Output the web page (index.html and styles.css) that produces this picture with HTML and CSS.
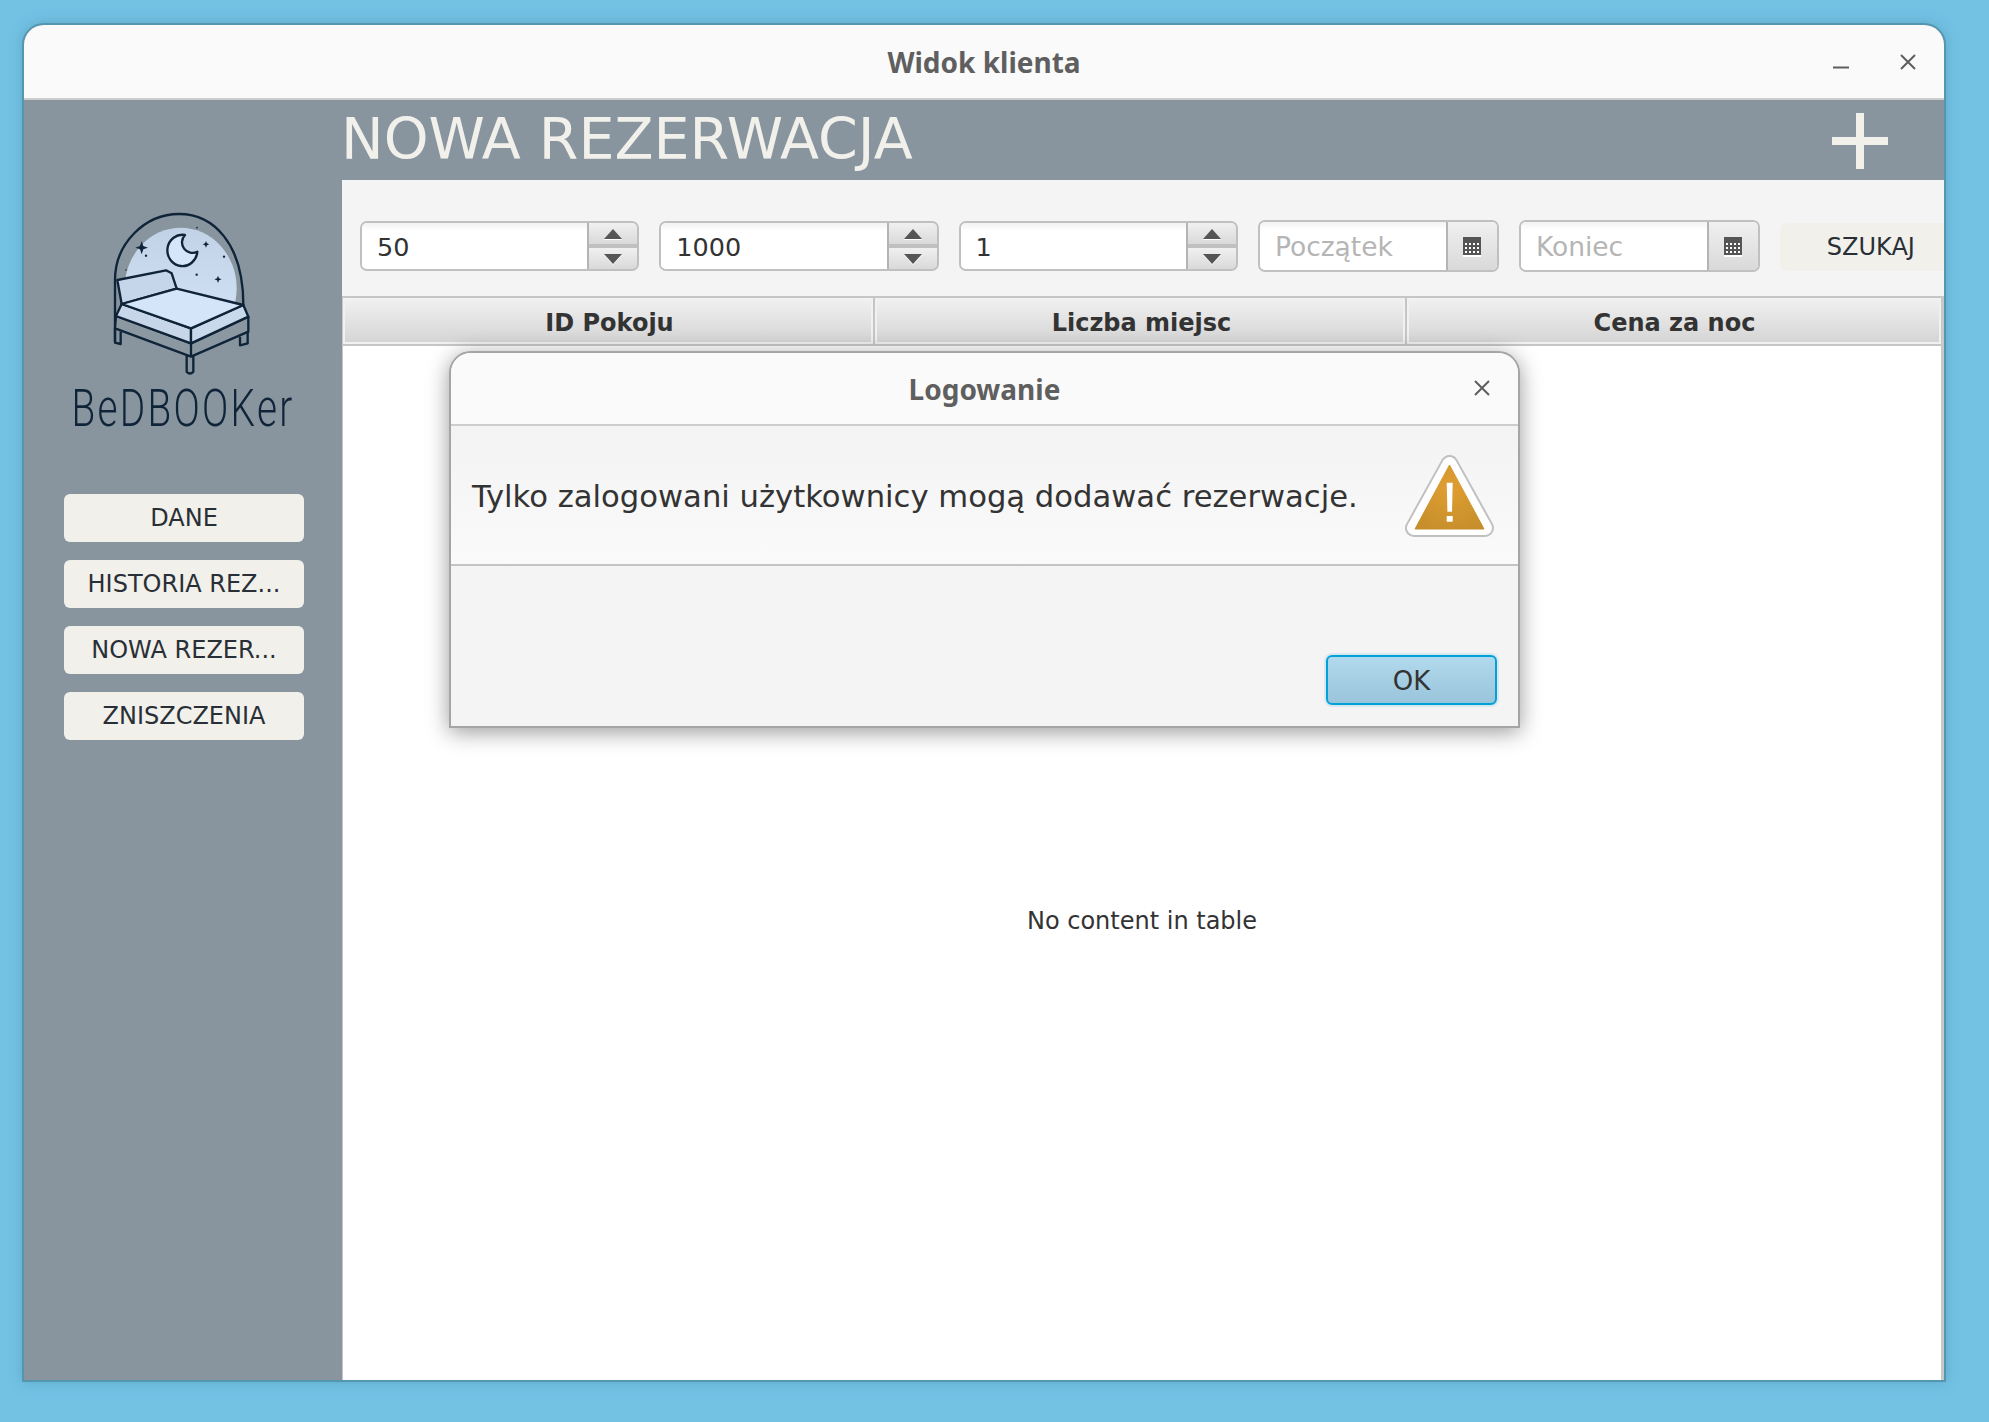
FILE: index.html
```html
<!DOCTYPE html>
<html lang="pl">
<head>
    <meta charset="UTF-8">
    <meta name="viewport" content="width=device-width, initial-scale=1.0">
    <title>Widok klienta</title>
    <link rel="stylesheet" href="styles.css">
</head>
<body>
    <div class="window">
        <div class="titlebar">
            <span></span>
            <span class="titlebar-text">Widok klienta</span>
            <div class="titlebar-buttons">
                <svg class="win-icon" viewBox="0 0 16 16"><path d="M0 13.5H16" /></svg>
                <svg class="win-icon" viewBox="0 0 16 16"><path d="M1 1L15 15M15 1L1 15" /></svg>
            </div>
        </div>

        <div class="main">
            <div class="sidebar">
                <svg class="logo" viewBox="0 0 780 570">
                    <defs>
                        <linearGradient id="sky" x1="0" y1="0" x2="0" y2="1">
                            <stop offset="0" stop-color="#c2d2e6" />
                            <stop offset="1" stop-color="#d6e7fb" />
                        </linearGradient>
                    </defs>
                    <ellipse cx="362" cy="295" rx="168" ry="182" fill="url(#sky)" />
                    <g class="logo-line">
                        <path d="M165 455V270C165 160 255 72 357 72C460 72 550 160 550 345" fill="none" />
                        <path d="M375 135A45 47 0 1 0 412 185A31.5 31.5 0 0 1 375 135Z" fill="#d6e6fa" />
                        <path d="M172 270L318 241L335 250L350 296L185 342Z" fill="#c5d5ea" />
                        <path d="M168 378L393 460L565 380V425L393 500L165 415Z" fill="#8b98a2" />
                        <path d="M185 342L393 415V460L168 378Z" fill="#c7d6e9" />
                        <path d="M393 415L550 345L565 380L393 460Z" fill="#c9d9ec" />
                        <path d="M185 342L350 296L550 345L393 415Z" fill="#d4e5fa" />
                        <path d="M393 460V500" fill="none" />
                        <path d="M165 415V458L182 462V425M540 440V466L563 460V425M380 497V545Q390 556 400 545V497" fill="none" />
                    </g>
                    <g class="logo-star">
                        <path d="M245 153L250 168L264 173L250 178L245 193L240 178L226 173L240 168Z" />
                        <path d="M438 153L441 160L448 163L441 166L438 173L435 166L428 163L435 160Z" />
                        <path d="M474 257L477 265L485 268L477 271L474 279L471 271L463 268L471 265Z" />
                        <circle cx="258" cy="197" r="3.5" />
                        <circle cx="492" cy="200" r="3.5" />
                        <circle cx="410" cy="254" r="3.5" />
                        <circle cx="198" cy="240" r="2.5" />
                        <circle cx="411" cy="113" r="2.5" />
                    </g>
                </svg>
                <div class="logo-text">BeDBOOKer</div>
                <div class="nav">
                    <button class="nav-btn">DANE</button>
                    <button class="nav-btn">HISTORIA REZ...</button>
                    <button class="nav-btn">NOWA REZER...</button>
                    <button class="nav-btn">ZNISZCZENIA</button>
                </div>
            </div>

            <div class="content">
                <div class="page-header">
                    <h1 class="page-title">NOWA REZERWACJA</h1>
                    <svg class="plus-icon" viewBox="0 0 56 56"><path d="M24 0H32V24H56V32H32V56H24V32H0V24H24Z" /></svg>
                </div>

                <div class="panel">
                    <div class="toolbar">
                        <div class="field spinner">
                            <input class="field-input" type="text" value="50">
                            <div class="spin-btns">
                                <div class="spin-btn"><span class="arrow-up"></span></div>
                                <div class="spin-btn"><span class="arrow-down"></span></div>
                            </div>
                        </div>
                        <div class="field spinner">
                            <input class="field-input" type="text" value="1000">
                            <div class="spin-btns">
                                <div class="spin-btn"><span class="arrow-up"></span></div>
                                <div class="spin-btn"><span class="arrow-down"></span></div>
                            </div>
                        </div>
                        <div class="field spinner">
                            <input class="field-input" type="text" value="1">
                            <div class="spin-btns">
                                <div class="spin-btn"><span class="arrow-up"></span></div>
                                <div class="spin-btn"><span class="arrow-down"></span></div>
                            </div>
                        </div>
                        <div class="field date">
                            <input class="field-input" type="text" placeholder="Początek">
                            <div class="date-btn">
                                <svg class="cal-icon" viewBox="0 0 18 20"><path fill="#fff" d="M0 18H18V20H0Z" /><path fill="#555" d="M0 0H18V18H0Z" /><path fill="#fff" d="M2 6h2v2H2zM6 6h2v2H6zM10 6h2v2h-2zM14 6h2v2h-2zM2 10h2v2H2zM6 10h2v2H6zM10 10h2v2h-2zM14 10h2v2h-2zM2 14h2v2H2zM6 14h2v2H6zM10 14h2v2h-2zM14 14h2v2h-2z" /></svg>
                            </div>
                        </div>
                        <div class="field date">
                            <input class="field-input" type="text" placeholder="Koniec">
                            <div class="date-btn">
                                <svg class="cal-icon" viewBox="0 0 18 20"><path fill="#fff" d="M0 18H18V20H0Z" /><path fill="#555" d="M0 0H18V18H0Z" /><path fill="#fff" d="M2 6h2v2H2zM6 6h2v2H6zM10 6h2v2h-2zM14 6h2v2h-2zM2 10h2v2H2zM6 10h2v2H6zM10 10h2v2h-2zM14 10h2v2h-2zM2 14h2v2H2zM6 14h2v2H6zM10 14h2v2h-2zM14 14h2v2h-2z" /></svg>
                            </div>
                        </div>
                        <button class="search-btn">SZUKAJ</button>
                    </div>

                    <div class="table">
                        <div class="table-head">
                            <div class="table-col">ID Pokoju</div>
                            <div class="table-col">Liczba miejsc</div>
                            <div class="table-col">Cena za noc</div>
                        </div>
                        <div class="table-empty">No content in table</div>
                    </div>
                </div>
            </div>
        </div>

        <div class="dialog">
            <div class="dialog-title">
                <span></span>
                <span class="dialog-title-text">Logowanie</span>
                <svg class="win-icon dialog-close" viewBox="0 0 16 16"><path d="M1 1L15 15M15 1L1 15" /></svg>
            </div>
            <div class="dialog-msg">
                <span class="dialog-text">Tylko zalogowani użytkownicy mogą dodawać rezerwacje.</span>
                <svg class="warn-icon" viewBox="0 0 89 82">
                    <defs>
                        <radialGradient id="warn" cx="0.5" cy="0.35" r="0.7">
                            <stop offset="0" stop-color="#e09e32" />
                            <stop offset="1" stop-color="#c68f2b" />
                        </radialGradient>
                    </defs>
                    <path d="M44.5 9L9 73H80Z" fill="#fff" stroke="#c0c0c0" stroke-width="18" stroke-linejoin="round" />
                    <path d="M44.5 9L9 73H80Z" fill="#fff" stroke="#fff" stroke-width="14" stroke-linejoin="round" />
                    <path d="M44.5 10L10 74H79Z" fill="url(#warn)" stroke="url(#warn)" stroke-width="1" stroke-linejoin="round" />
                    <path d="M41.7 27.7H47.7L47 56.7H42.4Z" fill="#fff" />
                    <path d="M41.7 61H47.7V66.7H41.7Z" fill="#fff" />
                </svg>
            </div>
            <div class="dialog-footer">
                <button class="ok-btn">OK</button>
            </div>
        </div>
    </div>
</body>
</html>
```

FILE: styles.css
```css
* {
    box-sizing: border-box;
}
body {
    margin: 0;
    padding: 23px 0 0 22px;
    height: 1422px;
    overflow: hidden;
    background-color: #73c2e4;
    font-family: "DejaVu Sans", sans-serif;
}
button, input {
    font-family: inherit;
}
.window {
    position: relative;
    width: 1924px;
    height: 1359px;
    display: flex;
    flex-direction: column;
    overflow: hidden;
    border: 2px solid #5496b0;
    border-radius: 22px 22px 0 0;
    background: #88959f;
    box-shadow: 0 0 14px rgba(60, 120, 150, 0.35);
}
.titlebar {
    height: 75px;
    flex-shrink: 0;
    display: grid;
    grid-template-columns: 1fr auto 1fr;
    align-items: center;
    background: #fafafa;
    border-bottom: 2px solid #cdcdcd;
}
.titlebar-text {
    padding-top: 1px;
    font-family: "Noto Sans", sans-serif;
    font-weight: 700;
    font-size: 28px;
    color: #5f5f5f;
}
.titlebar-buttons {
    display: flex;
    justify-content: flex-end;
    gap: 51px;
    padding-right: 28px;
}
.win-icon {
    width: 16px;
    height: 16px;
    fill: none;
    stroke: #5e5e5e;
    stroke-width: 2;
}
.main {
    flex: 1;
    display: flex;
    min-height: 0;
}
.sidebar {
    width: 318px;
    flex-shrink: 0;
    padding-top: 90px;
}
.logo {
    display: block;
    width: 260px;
    height: 190px;
    margin-left: 36px;
}
.logo-text {
    width: 294px;
    height: 60px;
    margin-left: 12px;
    text-align: center;
    white-space: nowrap;
    font-family: Roboto, sans-serif;
    font-weight: 300;
    font-size: 51px;
    line-height: 58px;
    letter-spacing: 3px;
    color: #0f2438;
    transform: scaleX(0.76);
}
.logo-line {
    stroke: #0f2438;
    stroke-width: 7;
    stroke-linejoin: round;
}
.logo-star {
    fill: #0f2438;
}
.nav {
    display: flex;
    flex-direction: column;
    gap: 18px;
    margin-top: 54px;
    padding-left: 40px;
}
.nav-btn {
    width: 240px;
    height: 48px;
    border: none;
    border-radius: 6px;
    background: #f2f0eb;
    color: #292f36;
    font-size: 24px;
}
.content {
    flex: 1;
    min-width: 0;
    display: flex;
    flex-direction: column;
}
.page-header {
    height: 80px;
    flex-shrink: 0;
    display: flex;
    align-items: center;
    justify-content: space-between;
    padding: 0 56px 0 0;
}
.page-title {
    margin: 0 0 3px -1px;
    font-size: 57px;
    font-weight: 400;
    color: #f2f0eb;
}
.plus-icon {
    width: 56px;
    height: 56px;
    margin-top: 2px;
    fill: #f2f0eb;
}
.panel {
    flex: 1;
    min-height: 0;
    display: flex;
    flex-direction: column;
    background: #f4f4f4;
}
.toolbar {
    height: 116px;
    flex-shrink: 0;
    display: flex;
    align-items: center;
    gap: 20px;
    padding: 40px 0 24px 18px;
}
.field {
    flex-shrink: 0;
    display: flex;
    border: 2px solid #c0c0c0;
    border-radius: 7px;
    background: #fff;
    overflow: hidden;
}
.spinner {
    width: 279.3px;
    height: 50px;
}
.date {
    width: 241px;
    height: 52px;
}
.field-input {
    flex: 1;
    min-width: 0;
    border: none;
    outline: none;
    padding: 1px 14px 0 15px;
    font-size: 25.5px;
    color: #333;
    background: linear-gradient(#f2f2f2, #fff 8px);
}
.date .field-input {
    font-size: 26.5px;
}
.field-input::placeholder {
    color: #b5b5b5;
    opacity: 1;
}
.spin-btns {
    width: 50px;
    flex-shrink: 0;
    display: flex;
    flex-direction: column;
    gap: 4px;
    background: #c0c0c0;
    border-left: 2px solid #b4b4b4;
}
.spin-btn {
    flex: 1;
    display: flex;
    align-items: center;
    justify-content: center;
    background: linear-gradient(#f0f0f0, #d9d9d9);
}
.arrow-up, .arrow-down {
    width: 0;
    height: 0;
    border-left: 9px solid transparent;
    border-right: 9px solid transparent;
    filter: drop-shadow(0 1px 0 #fff);
}
.arrow-up {
    border-bottom: 10px solid #555;
}
.arrow-down {
    border-top: 10px solid #555;
}
.date-btn {
    width: 51px;
    flex-shrink: 0;
    display: flex;
    align-items: center;
    justify-content: center;
    padding-top: 2px;
    border-left: 2px solid #b4b4b4;
    background: linear-gradient(#f0f0f0, #d9d9d9);
}
.cal-icon {
    width: 18px;
    height: 20px;
}
.search-btn {
    width: 182px;
    height: 48px;
    flex-shrink: 0;
    margin-top: 2px;
    border: none;
    border-radius: 6px;
    background: #f2f0eb;
    color: #292f36;
    font-size: 24px;
}
.table {
    flex: 1;
    min-height: 0;
    display: flex;
    flex-direction: column;
    background: #fff;
    border-left: 1px solid #c6c6c6;
    border-right: 3px solid #c8c8c8;
}
.table-head {
    display: grid;
    grid-template-columns: 532px 532px 1fr;
    height: 50px;
    flex-shrink: 0;
    border-top: 2px solid #c6c6c6;
    border-bottom: 2px solid #c6c6c6;
}
.table-col {
    display: flex;
    align-items: center;
    justify-content: center;
    padding: 3px 0 0 3px;
    background: linear-gradient(#f1f1f1, #d4d4d4);
    box-shadow: inset 0 0 0 2px #f1f1f1;
    border-right: 2px solid #c6c6c6;
    font-size: 24px;
    font-weight: 700;
    color: #333;
}
.table-col:last-child {
    padding-left: 1px;
    border-right: none;
}
.table-empty {
    padding-top: 561px;
    text-align: center;
    font-size: 24px;
    color: #333;
}
.dialog {
    position: absolute;
    left: 425px;
    top: 326px;
    width: 1071px;
    height: 377px;
    display: flex;
    flex-direction: column;
    background: #f4f4f4;
    border: 2px solid #a5a5a5;
    border-radius: 22px 22px 0 0;
    box-shadow: 0 4px 22px rgba(0, 0, 0, 0.4);
}
.dialog-title {
    height: 73px;
    flex-shrink: 0;
    display: grid;
    grid-template-columns: 1fr auto 1fr;
    align-items: center;
    background: #fafafa;
    border-bottom: 2px solid #cdcdcd;
    border-radius: 20px 20px 0 0;
}
.dialog-title-text {
    font-family: "Noto Sans", sans-serif;
    font-weight: 700;
    font-size: 28px;
    color: #5f5f5f;
}
.dialog-close {
    justify-self: end;
    margin: 0 28px 2px 0;
}
.dialog-msg {
    height: 140px;
    flex-shrink: 0;
    display: flex;
    align-items: center;
    justify-content: space-between;
    padding: 2px 24px 0 21px;
    background: linear-gradient(#f3f3f3, #fafafa);
    border-bottom: 2px solid #c4c4c4;
}
.dialog-text {
    white-space: nowrap;
    font-size: 30.65px;
    color: #333;
}
.warn-icon {
    width: 89px;
    height: 82px;
}
.dialog-footer {
    flex: 1;
    display: flex;
    justify-content: flex-end;
    align-items: flex-end;
    padding: 0 21px 21px 0;
}
.ok-btn {
    width: 171px;
    height: 50px;
    padding-top: 3px;
    border: 2px solid #02a0d8;
    border-radius: 6px;
    background: linear-gradient(#b2daee, #99c4da);
    box-shadow: 0 0 0 2px rgba(2, 160, 216, 0.12);
    font-size: 26px;
    color: #333;
}
```
